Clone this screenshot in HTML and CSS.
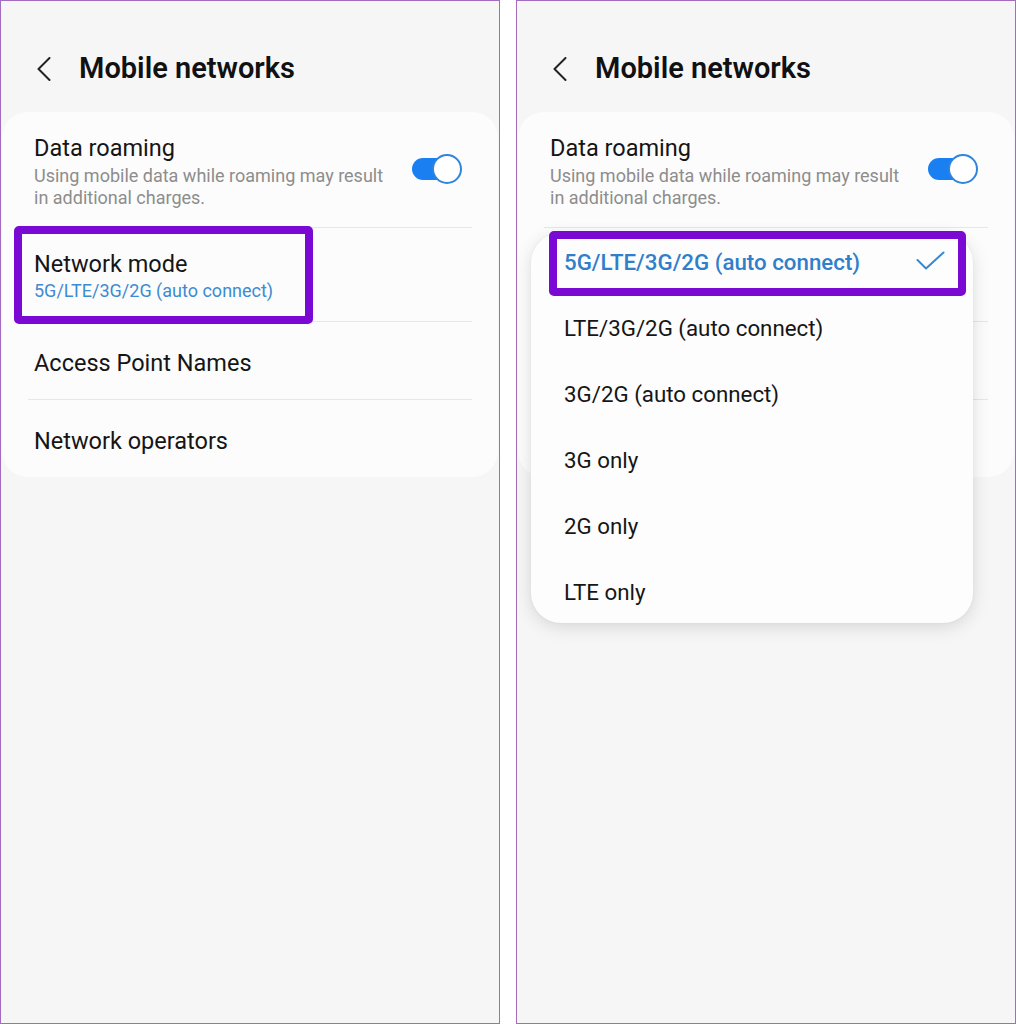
FILE: index.html
```html
<!DOCTYPE html>
<html lang="en">
<head>
<meta charset="utf-8">
<title>Mobile networks</title>
<link rel="stylesheet" href="styles.css">
</head>
<body>
<div class="pair">
  <section class="panel">
    <header class="head">
      <svg class="back" width="14" height="24" viewBox="0 0 14 24"><polyline points="12.5,1 1.5,12 12.5,23" fill="none" stroke="#222" stroke-width="2" stroke-linecap="round" stroke-linejoin="round"/></svg>
      <h1 class="title">Mobile networks</h1>
    </header>
    <div class="card">
      <div class="row row-first">
        <div class="text">
          <div class="name">Data roaming</div>
          <div class="desc">Using mobile data while roaming may result in additional charges.</div>
        </div>
        <div class="toggle"><span class="thumb"></span></div>
      </div>
      <div class="row row-two">
        <div class="text">
          <div class="name">Network mode</div>
          <div class="value">5G/LTE/3G/2G (auto connect)</div>
        </div>
      </div>
      <div class="row row-one"><div class="name">Access Point Names</div></div>
      <div class="row row-one row-last"><div class="name">Network operators</div></div>
    </div>
    <div class="mark mark-left"></div>
  </section>

  <section class="panel">
    <header class="head">
      <svg class="back" width="14" height="24" viewBox="0 0 14 24"><polyline points="12.5,1 1.5,12 12.5,23" fill="none" stroke="#222" stroke-width="2" stroke-linecap="round" stroke-linejoin="round"/></svg>
      <h1 class="title">Mobile networks</h1>
    </header>
    <div class="card">
      <div class="row row-first">
        <div class="text">
          <div class="name">Data roaming</div>
          <div class="desc">Using mobile data while roaming may result in additional charges.</div>
        </div>
        <div class="toggle"><span class="thumb"></span></div>
      </div>
      <div class="row row-two">
        <div class="text">
          <div class="name">Network mode</div>
          <div class="value">5G/LTE/3G/2G (auto connect)</div>
        </div>
      </div>
      <div class="row row-one"><div class="name">Access Point Names</div></div>
      <div class="row row-one row-last"><div class="name">Network operators</div></div>
    </div>
    <div class="menu">
      <div class="opt opt-on"><span>5G/LTE/3G/2G (auto connect)</span>
        <svg class="check" width="29" height="19" viewBox="0 0 29 19"><polyline points="1.5,9 10,17.5 27.5,1.5" fill="none" stroke="#3a86d2" stroke-width="2" stroke-linecap="round" stroke-linejoin="round"/></svg>
      </div>
      <div class="opt">LTE/3G/2G (auto connect)</div>
      <div class="opt">3G/2G (auto connect)</div>
      <div class="opt">3G only</div>
      <div class="opt">2G only</div>
      <div class="opt">LTE only</div>
    </div>
    <div class="mark mark-right"></div>
  </section>
</div>
</body>
</html>
```

FILE: styles.css
```css
* { box-sizing: border-box; }
html, body { margin: 0; padding: 0; background: #ffffff; }
body { font-family: Roboto, "Noto Sans", "Liberation Sans", sans-serif; color: #111; }

.pair { display: flex; gap: 16px; width: 1016px; height: 1024px; }

.panel {
  position: relative;
  width: 500px;
  height: 1024px;
  border: 1px solid #a46cbf;
  background: #f6f6f6;
  overflow: hidden;
}

.head {
  display: flex;
  align-items: flex-start;
  gap: 28px;
  height: 111px;
  padding: 50px 0 0 36px;
}
.back { margin-top: 6px; flex: none; }
.title {
  margin: 0;
  font-size: 29px;
  line-height: 34px;
  font-weight: 600;
  color: #111;
  letter-spacing: 0;
}

.card {
  margin: 0 1px 0 1px;
  background: #fcfcfc;
  border-radius: 26px;
}

.row {
  margin: 0 26px;
  padding: 0 6px;
  border-top: 1px solid #e7e7e7;
  display: flex;
  align-items: center;
}
.row-first { border-top: none; padding-top: 22px; height: 115px; align-items: flex-start; }
.row-two { height: 94px; padding-top: 22px; align-items: flex-start; }
.row-one { height: 78px; padding-top: 4px; }
.row-last { height: 78px; padding-top: 4px; }

.text { flex: 1; }
.name { font-size: 23.5px; line-height: 28px; color: #151515; }
.desc { font-size: 18px; line-height: 22px; color: #8d8d8d; width: 352px; margin-top: 3px; }
.value { font-size: 18px; line-height: 25px; color: #3d8bd2; }

.toggle {
  position: relative;
  width: 50px;
  height: 30px;
  margin-top: 20px;
  margin-right: 4px;
  flex: none;
}
.toggle::before {
  content: "";
  position: absolute;
  left: 0; top: 4px;
  width: 42px; height: 22px;
  border-radius: 11px;
  background: #1a80f2;
}
.thumb {
  position: absolute;
  right: 0; top: 0;
  width: 30px; height: 30px;
  border-radius: 50%;
  background: #fff;
  border: 2px solid #2f84dc;
}

.menu {
  position: absolute;
  left: 14px; top: 232px;
  width: 442px; height: 390px;
  background: #fdfdfd;
  border-radius: 30px;
  box-shadow: 0 4px 18px rgba(0,0,0,0.13), 0 0 3px rgba(0,0,0,0.05);
}
.opt {
  height: 66px;
  line-height: 58px;
  padding: 0 0 8px 33px;
  font-size: 22.3px;
  color: #161616;
}
.opt-on {
  display: flex;
  align-items: center;
  justify-content: space-between;
  padding-right: 28px;
  color: #2f7fcb;
  font-weight: 500;
}
.check { margin-top: -4px; }

.mark {
  position: absolute;
  border: 8.5px solid #7a0ad3;
  border-radius: 5px;
}
.mark-left { left: 13px; top: 225px; width: 299px; height: 98px; }
.mark-right { left: 32px; top: 230px; width: 417px; height: 65px; }
```
